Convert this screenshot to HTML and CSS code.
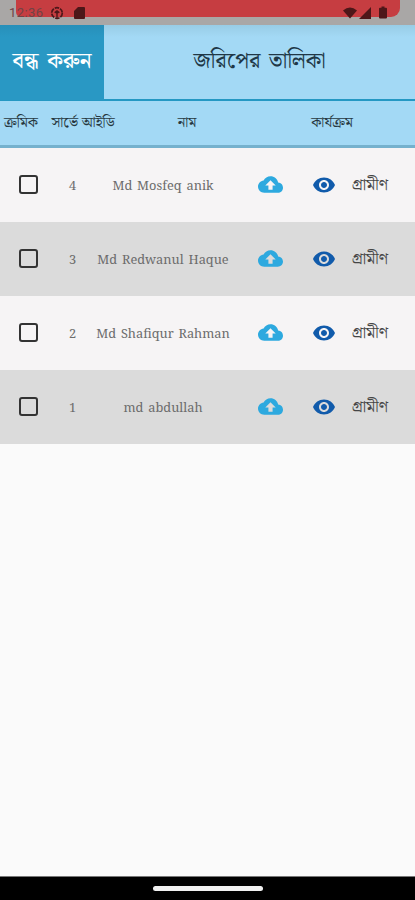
FILE: index.html
```html
<!DOCTYPE html>
<html lang="bn">
<head>
<meta charset="utf-8">
<title>জরিপের তালিকা</title>
<link rel="stylesheet" href="styles.css">
</head>
<body>
<svg class="symbols" aria-hidden="true">
  <symbol id="cloud" viewBox="0 0 24 24"><path d="M19.35 10.04C18.67 6.59 15.64 4 12 4 9.11 4 6.6 5.64 5.35 8.04 2.34 8.36 0 10.91 0 14c0 3.31 2.69 6 6 6h13c2.76 0 5-2.24 5-5 0-2.64-2.05-4.78-4.65-4.96zM14 13v4h-4v-4H7l5-5 5 5h-3z"/></symbol>
  <symbol id="eye" viewBox="0 0 24 24"><path d="M12 4.5C7 4.5 2.73 7.61 1 12c1.73 4.39 6 7.500 11 7.500s9.270-3.110 11-7.500c-1.730-4.390-6-7.500-11-7.500zM12 17c-2.760 0-5-2.240-5-5s2.240-5 5-5 5 2.240 5 5-2.240 5-5 5zm0-8c-1.660 0-3 1.340-3 3s1.340 3 3 3 3-1.340 3-3-1.340-3-3-3z"/></symbol>
</svg>
<div class="app">
  <div class="status">
    <div class="banner"></div>
    <span class="time">12:36</span>
    <svg class="st-sync" viewBox="0 0 14 14"><circle cx="7" cy="7" r="5.3" fill="none" stroke="currentColor" stroke-width="1.7" stroke-dasharray="4.5 1"/><path d="M4 6.200 7 4l3 2.200L7 8zM6.300 7h1.400v5H6.300z" fill="currentColor"/></svg>
    <svg class="st-card" viewBox="0 0 11 12"><path d="M4 0h6q1 0 1 1v10q0 1-1 1H1q-1 0-1-1V4z" fill="currentColor"/></svg>
    <span class="grow"></span>
    <svg class="st-wifi" viewBox="0 0 14 11"><path d="M0 3Q7-3 14 3L7 11z" fill="currentColor"/></svg>
    <svg class="st-signal" viewBox="0 0 12 12"><path d="M12 0v12H0z" fill="currentColor"/></svg>
    <svg class="st-battery" viewBox="0 0 8 12"><path d="M2.500 0h3v1.300H7q1 0 1 1V11q0 1-1 1H1q-1 0-1-1V2.300q0-1 1-1h1.500z" fill="currentColor"/></svg>
  </div>
  <header class="header">
    <div class="close"><span>বন্ধ করুন</span></div>
    <h1 class="title"><span>জরিপের তালিকা</span></h1>
  </header>
  <div class="columns">
    <span>ক্রমিক</span>
    <span>সার্ভে আইডি</span>
    <span>নাম</span>
    <span>কার্যক্রম</span>
  </div>
  <main class="list">
    <div class="row"><i class="box"></i><span class="num">4</span><span class="name">Md Mosfeq anik</span><svg class="cloud"><use href="#cloud"/></svg><svg class="eye"><use href="#eye"/></svg><span class="type">গ্রামীণ</span></div>
    <div class="row"><i class="box"></i><span class="num">3</span><span class="name">Md Redwanul Haque</span><svg class="cloud"><use href="#cloud"/></svg><svg class="eye"><use href="#eye"/></svg><span class="type">গ্রামীণ</span></div>
    <div class="row"><i class="box"></i><span class="num">2</span><span class="name">Md Shafiqur Rahman</span><svg class="cloud"><use href="#cloud"/></svg><svg class="eye"><use href="#eye"/></svg><span class="type">গ্রামীণ</span></div>
    <div class="row"><i class="box"></i><span class="num">1</span><span class="name">md abdullah</span><svg class="cloud"><use href="#cloud"/></svg><svg class="eye"><use href="#eye"/></svg><span class="type">গ্রামীণ</span></div>
  </main>
  <footer class="nav"><div class="handle"></div></footer>
</div>
</body>
</html>
```
FILE: styles.css
```css
* { box-sizing: border-box; }
body { margin: 0; font-family: "Noto Serif Bengali", "Noto Sans Bengali", "Noto Sans", sans-serif; color: #263740; }
.symbols { position: absolute; width: 0; height: 0; }
.app { width: 415px; height: 900px; display: flex; flex-direction: column; background: #fafafa; overflow: hidden; }
.status { height: 25px; flex: none; display: flex; align-items: center; background: #a9a7a6; position: relative; color: #4d1719; padding: 0 28px 0 9px; }
.status > * { flex: none; position: relative; }
.status .banner { position: absolute; left: 16px; top: 0; width: 384px; height: 17px; background: #c63d41; border-radius: 0 0 9px 5px; }
.time { font: 13px/25px Roboto, sans-serif; width: 41px; letter-spacing: .4px; color: #704346; }
.status .grow { flex: 1; }
.st-sync { width: 14px; height: 14px; }
.st-card { width: 11px; height: 12px; margin-left: 10px; }
.st-wifi { width: 14px; height: 12px; }
.st-signal { width: 12px; height: 12px; margin-left: 2px; }
.st-battery { width: 8px; height: 13px; margin-left: 8px; }
.header { height: 76px; flex: none; display: flex; background: linear-gradient(#98cce5, #a3d9f5 12px); border-bottom: 2px solid #2498c3; }
.close { width: 104px; height: 75px; background: linear-gradient(#278fb9, #2998c4 12px); color: #fff; font-size: 22px; font-weight: 500; line-height: 73px; word-spacing: 3px; text-align: center; white-space: nowrap; }
.title { flex: 1; margin: 0; font-size: 22px; font-weight: 400; line-height: 73px; word-spacing: 3px; text-align: center; color: #203746; white-space: nowrap; }
.columns { height: 47px; flex: none; display: grid; grid-template-columns: 42px 82px 126px 164px; background: #a3d9f5; border-bottom: 3px solid #75b1cd; font-size: 14.5px; line-height: 43px; text-align: center; white-space: nowrap; }
.list { flex: 1; }
.row { height: 74px; padding-bottom: 1px; display: grid; grid-template-columns: 56px 33px 148px 67px 39px 54px; align-items: center; justify-items: center; background: #f6f4f5; }
.row:nth-child(even) { background: #dbdbdb; }
.box { width: 19px; height: 19px; border: 2px solid #333; border-radius: 3px; }
.num, .name { font-family: "Noto Serif", "DejaVu Serif", serif; font-size: 12.8px; color: #6c6c6c; word-spacing: 1.5px; white-space: nowrap; }
.cloud { width: 25px; height: 25px; fill: #2da9df; }
.eye { width: 24px; height: 24px; fill: #115bab; }
.type { font-size: 16.5px; color: #454545; white-space: nowrap; }
.nav { height: 24px; flex: none; background: #000; border-top: 1px solid #777; display: flex; justify-content: center; padding-top: 9px; }
.handle { width: 110px; height: 5px; border-radius: 3px; background: #f1f1f1; }
```
